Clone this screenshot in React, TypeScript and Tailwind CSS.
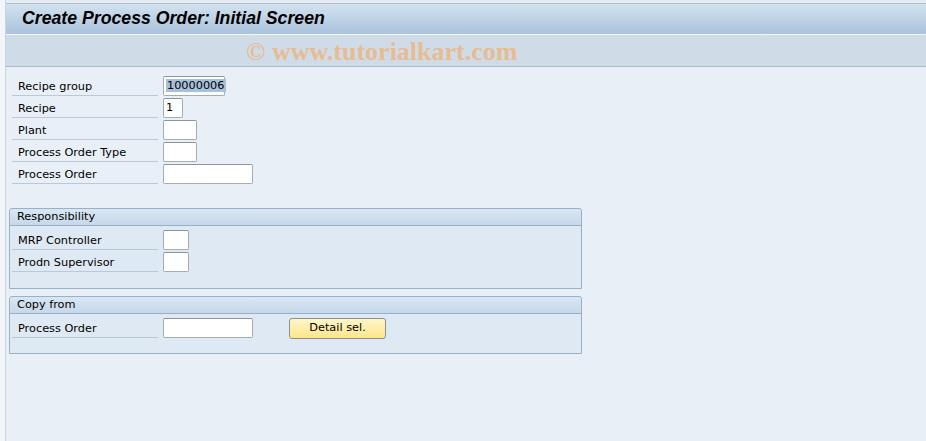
import React from 'react';

const font = { fontFamily: '"DejaVu Sans", Tahoma, sans-serif' };

function Field({ label, width, value, selected, ml }: { label: string; width: number; value?: string; selected?: boolean; ml: number }) {
  return (
    <div className="flex items-center h-[22px]">
      <div
        className="w-[146px] h-[20px] border-b border-[#b9c9d8] pl-[6px] pt-[1px] text-[11.3px] leading-[19px] text-black"
        style={{ marginLeft: ml }}
      >
        {label}
      </div>
      <div
        className="ml-[5px] h-[20px] border border-[#a5acb2] border-t-[#8d949a] bg-white rounded-[2px] text-[11.3px] leading-[18px] pl-[2px] text-black"
        style={{ width }}
      >
        {value && (
          <span className={selected ? 'bg-[#a9c0da] px-[1px]' : ''}>{value}</span>
        )}
      </div>
    </div>
  );
}

function Group({ title, children, height }: { title: string; children: React.ReactNode; height: number }) {
  return (
    <div
      className="ml-[9px] w-[573px] border border-[#98b0c8] rounded-t-[3px] bg-[#dfe9f3] flex flex-col"
      style={{ height }}
    >
      <div className="h-[17px] bg-gradient-to-b from-[#dae6f2] to-[#c5d8eb] border-b border-[#98b0c8] pl-[7px] text-[11.3px] leading-[16px] text-black rounded-t-[3px]">
        {title}
      </div>
      <div className="pt-[3px]">{children}</div>
    </div>
  );
}

export default function App() {
  return (
    <div className="w-[926px] h-[441px] bg-[#e8eff7] flex overflow-hidden" style={font}>
      <div className="w-[6px] h-full bg-[#f2f5f9] border-r border-[#c9d5e1]" />
      <div className="flex-1 flex flex-col">
        <div className="h-[3px] bg-[#e6ecf3]" />
        <div className="h-[1px] bg-[#b0bccb]" />
        <div className="h-[30px] bg-gradient-to-b from-[#d3e2ef] to-[#a9c2dc] flex items-center pl-[16px] pb-[1px]">
          <span className="text-[17.7px] font-bold italic text-black" style={{ fontFamily: '"Liberation Sans", Arial, sans-serif' }}>
            Create Process Order: Initial Screen
          </span>
        </div>
        <div className="h-[1px] bg-[#f4f8fb]" />
        <div className="h-[32px] bg-[#cfdce8] border-b border-[#a9b9ca] flex items-center pl-[240px] pt-[2px]">
          <span className="text-[26px] font-bold text-[#eab98a] opacity-90" style={{ fontFamily: '"Liberation Serif", "Times New Roman", serif' }}>
            © www.tutorialkart.com
          </span>
        </div>
        <div className="-ml-[6px]">
          <div className="pt-[8px]">
            <Field ml={12} label="Recipe group" width={62} value="10000006" selected />
            <Field ml={12} label="Recipe" width={20} value="1" />
            <Field ml={12} label="Plant" width={34} />
            <Field ml={12} label="Process Order Type" width={34} />
            <Field ml={12} label="Process Order" width={90} />
          </div>
          <div className="mt-[23px]">
            <Group title="Responsibility" height={81}>
              <Field ml={2} label="MRP Controller" width={26} />
              <Field ml={2} label="Prodn Supervisor" width={26} />
            </Group>
            <div className="h-[7px]" />
            <Group title="Copy from" height={58}>
              <div className="flex items-center">
                <Field ml={2} label="Process Order" width={90} />
                <button className="ml-[36px] w-[97px] h-[21px] rounded-[3px] border border-[#8f8f8f] bg-gradient-to-b from-[#fff6c9] to-[#ffe58a] text-[11.3px] text-black leading-[18px]">
                  Detail sel.
                </button>
              </div>
            </Group>
          </div>
        </div>
      </div>
    </div>
  );
}
